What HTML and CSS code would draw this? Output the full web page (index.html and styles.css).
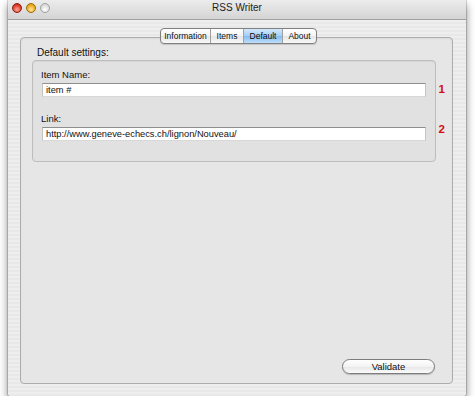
FILE: index.html
```html
<!DOCTYPE html>
<html>
<head>
<meta charset="utf-8">
<link rel="stylesheet" href="styles.css">
</head>
<body>
<div class="window">
  <div class="titlebar">
    <div class="lights">
      <span class="light red"></span>
      <span class="light yellow"></span>
      <span class="light gray"></span>
    </div>
    <div class="title">RSS Writer</div>
  </div>
  <div class="content">
    <div class="tabs">
      <span class="tab t-info">Information</span>
      <span class="tab t-items">Items</span>
      <span class="tab t-default selected">Default</span>
      <span class="tab t-about">About</span>
    </div>
    <div class="panel">
      <div class="group-label">Default settings:</div>
      <div class="group">
        <div class="field-label">Item Name:</div>
        <div class="field">item #</div>
        <div class="field-label second">Link:</div>
        <div class="field">http://www.geneve-echecs.ch/lignon/Nouveau/</div>
        <span class="num n1">1</span>
        <span class="num n2">2</span>
      </div>
      <div class="spacer"></div>
      <div class="actions">
        <button class="btn">Validate</button>
      </div>
    </div>
  </div>
</div>
</body>
</html>
```

FILE: styles.css
```css
html, body {
  margin: 0;
  padding: 0;
  background: #ffffff;
  font-family: "Liberation Sans", Arial, sans-serif;
  color: #111;
}
.window {
  margin-left: 8px;
  width: 458px;
  height: 396px;
  background: repeating-linear-gradient(to bottom, #eeeeee 0px, #eeeeee 2px, #e8e8e8 2px, #e8e8e8 4px);
  border-radius: 0 0 3px 3px;
  box-shadow: 0 5px 9px rgba(0,0,0,0.5), 0 0 0 1px rgba(0,0,0,0.15);
  display: flex;
  flex-direction: column;
  overflow: hidden;
}
.titlebar {
  height: 20px;
  flex: none;
  background: linear-gradient(to bottom, #ececec, #d4d4d4);
  border-bottom: 1px solid #a0a0a0;
  box-sizing: border-box;
  display: flex;
  align-items: center;
  position: relative;
}
.lights {
  display: flex;
  gap: 4px;
  padding-left: 4px;
  margin-top: -4px;
}
.light {
  width: 10px;
  height: 10px;
  border-radius: 50%;
  display: block;
  box-sizing: border-box;
}
.red { background: radial-gradient(circle at 50% 70%, #ffa496, #d8321f 70%); border: 1px solid #8c1a10; }
.yellow { background: radial-gradient(circle at 50% 70%, #ffe59a, #e5a414 70%); border: 1px solid #9a6a08; }
.gray { background: radial-gradient(circle at 50% 70%, #ffffff, #d8d8d8 70%); border: 1px solid #a0a0a0; }
.title {
  position: absolute;
  left: 0;
  right: 0;
  top: 2px;
  text-align: center;
  font-size: 10px;
  color: #222;
  pointer-events: none;
}
.content {
  flex: 1;
  padding: 8px 13px 12px 12px;
  display: flex;
  flex-direction: column;
}
.tabs {
  display: flex;
  align-self: center;
  margin-left: 4px;
  height: 14px;
  margin-bottom: -7px;
  position: relative;
  z-index: 2;
  border: 1px solid #808080;
  border-radius: 4px;
  overflow: hidden;
  background: linear-gradient(to bottom, #ffffff, #f3f3f3 50%, #e6e6e6 51%, #f8f8f8);
  box-shadow: 0 1px 1px rgba(0,0,0,0.15);
}
.tab {
  font-size: 8.5px;
  line-height: 14px;
  text-align: center;
  color: #111;
  border-left: 1px solid #a0a0a0;
  box-sizing: border-box;
}
.tab:first-child { border-left: none; }
.t-info { width: 49px; }
.t-items { width: 33px; }
.t-default { width: 39px; }
.t-about { width: 34px; }
.tab.selected {
  background: linear-gradient(to bottom, #d3e8fb, #a3cef5 50%, #85bbef 51%, #bcdefb);
  color: #0a0a0a;
}
.panel {
  flex: 1;
  background: #e6e6e6;
  border: 1px solid #adadad;
  border-radius: 4px;
  padding: 9px 17px 9px 11px;
  display: flex;
  flex-direction: column;
  box-shadow: inset 0 1px 2px rgba(0,0,0,0.06);
}
.group-label {
  font-size: 10px;
  margin-left: 5px;
  height: 12px;
  line-height: 12px;
  margin-bottom: 1px;
}
.group {
  position: relative;
  width: 404px;
  height: 102px;
  box-sizing: border-box;
  border: 1px solid #bdbdbd;
  border-radius: 4px;
  background: #e1e1e1;
  padding: 8px 9px 0 8px;
  box-shadow: inset 0 1px 1px rgba(0,0,0,0.05);
}
.field-label {
  font-size: 9.5px;
  line-height: 11px;
  height: 11px;
  margin-bottom: 3px;
}
.field-label.second { margin-top: 16px; }
.field {
  height: 14px;
  box-sizing: border-box;
  background: #fff;
  border-top: 1px solid #8e8e8e;
  border-left: 1px solid #c4c4c4;
  border-right: 1px solid #c4c4c4;
  border-bottom: 1px solid #d8d8d8;
  font-size: 9.3px;
  line-height: 12px;
  padding-left: 3px;
  margin-left: 1px;
  color: #111;
  white-space: nowrap;
}
.num {
  position: absolute;
  right: -10px;
  color: #d10f0f;
  font-weight: bold;
  font-size: 11.5px;
  line-height: 11px;
}
.n1 { top: 23px; }
.n2 { top: 63px; }
.spacer { flex: 1; }
.actions {
  display: flex;
  justify-content: flex-end;
}
.btn {
  width: 93px;
  height: 15px;
  padding: 0;
  font-family: "Liberation Sans", Arial, sans-serif;
  font-size: 9.5px;
  line-height: 13px;
  color: #111;
  border: 1px solid #7c7c7c;
  border-radius: 8px;
  background: linear-gradient(to bottom, #ffffff, #f3f3f3 50%, #e6e6e6 51%, #fbfbfb);
  box-shadow: 0 1px 1px rgba(0,0,0,0.2);
}
```
